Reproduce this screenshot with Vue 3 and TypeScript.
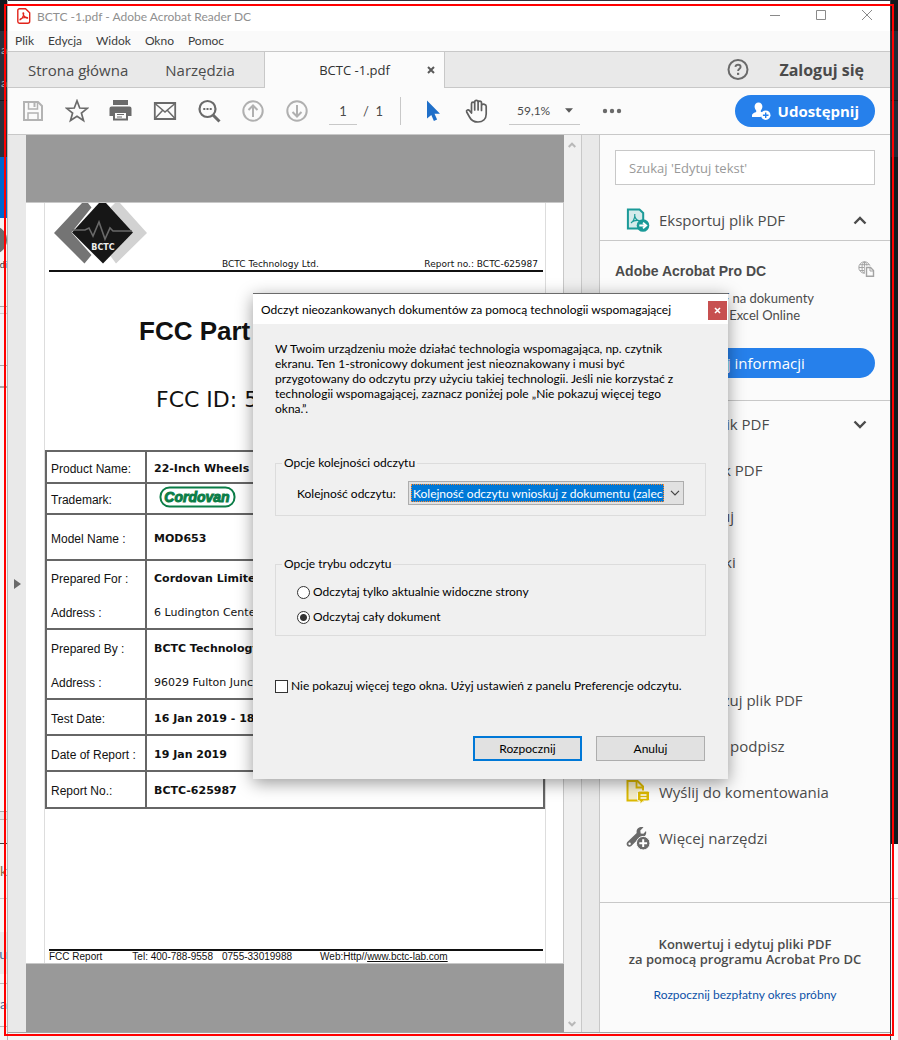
<script setup lang="ts">
import { ref } from 'vue'

interface ReportRow {
  kind: string
  label: string
  value: string
  address?: string
}

const menus: string[] = ['Plik', 'Edycja', 'Widok', 'Okno', 'Pomoc']

const rows: ReportRow[] = [
  { kind: 'r32', label: 'Product Name:', value: '22-Inch Wheels' },
  { kind: 'r31', label: 'Trademark:', value: '' },
  { kind: 'r46', label: 'Model Name :', value: 'MOD653' },
  { kind: 'r69', label: 'Prepared For :', value: 'Cordovan Limited', address: '6 Ludington Center' },
  { kind: 'r70', label: 'Prepared By :', value: 'BCTC Technology', address: '96029 Fulton Junct' },
  { kind: 'r36', label: 'Test Date:', value: '16 Jan 2019 - 18' },
  { kind: 'r36', label: 'Date of Report :', value: '19 Jan 2019' },
  { kind: 'r37', label: 'Report No.:', value: 'BCTC-625987' },
]

const query = ref('')
const page = ref('1')
const order = ref('infer')
const mode = ref('all')
const hideDialog = ref(false)
</script>

<template>
  <div class="desktop">
    <div class="strip strip-left" aria-hidden="true">
      <span class="bit b1">a</span>
      <span class="bit b2">a</span>
      <span class="disc"></span>
      <span class="bit b3">di</span>
      <span class="bit b4">k</span>
      <span class="bit b5">ou</span>
      <span class="bit b6">ła</span>
    </div>

    <div class="window">
      <header class="titlebar">
        <svg class="app-icon" width="14" height="16" viewBox="0 0 14 16" fill="none" stroke="#e2231a">
          <path d="M2.5 .8h6l4.2 4v8.4a2 2 0 0 1-2 2H2.500a1.700 1.700 0 0 1-1.700-1.700V2.500A1.700 1.700 0 0 1 2.500.8z" stroke-width="1.400" />
          <path d="M3.200 11.800c1.600-.6 3.600-4 3.500-6.500 0-.9-.9-.6-.7.4.5 2.200 2.300 4 4 4.500 1 .2.900-.9-.4-.9-2 0-4.300.6-5.900 1.500-.9.500-.9 1.200-.5 1z" stroke-width="1.200" />
        </svg>
        <span class="title">BCTC -1.pdf - Adobe Acrobat Reader DC</span>
        <div class="win-buttons">
          <button type="button" aria-label="Minimalizuj"><svg width="12" height="12" viewBox="0 0 12 12" stroke="#8a8a8a"><path d="M1 5.500h10" /></svg></button>
          <button type="button" aria-label="Maksymalizuj"><svg width="12" height="12" viewBox="0 0 12 12" fill="none" stroke="#8a8a8a"><path d="M1.500 .5h9v9h-9z" /></svg></button>
          <button type="button" aria-label="Zamknij"><svg width="12" height="12" viewBox="0 0 12 12" stroke="#8a8a8a"><path d="M1 0l10 10M11 0L1 10" /></svg></button>
        </div>
      </header>

      <nav class="menubar">
        <button v-for="m in menus" :key="m" type="button">{{ m }}</button>
      </nav>

      <div class="tabs">
        <button type="button" class="tab home">Strona główna</button>
        <button type="button" class="tab tools">Narzędzia</button>
        <div class="tab-active">
          <button type="button" class="tab-name">BCTC -1.pdf</button>
          <button type="button" class="tab-close" aria-label="Zamknij kartę">
            <svg width="8" height="8" viewBox="0 0 8 8" stroke="#5a5a5a" stroke-width="2"><path d="M1 1l6 6M7 1L1 7" /></svg>
          </button>
        </div>
        <button type="button" class="help" aria-label="Pomoc">
          <svg width="22" height="22" viewBox="0 0 22 22" fill="none" stroke="#6a6a6a" stroke-width="2">
            <circle cx="11" cy="10.500" r="9.500" />
            <path d="M8.400 7.900c.2-1.600 1.300-2.200 2.700-2.200 1.500 0 2.500.9 2.500 2.200 0 1.800-2.500 2-2.500 4.200" stroke-width="1.900" />
            <path d="M11.100 13.800v2.100" stroke-width="2.200" />
          </svg>
        </button>
        <button type="button" class="login">Zaloguj się</button>
      </div>

      <div class="toolbar">
        <button type="button" class="tool" aria-label="Zapisz">
          <svg width="24" height="24" viewBox="0 0 24 24" fill="none" stroke="#b3b3b3" stroke-width="2">
            <path d="M3 3h14l4 4v14H3z" /><path d="M7.500 3v7h9V3M7 21v-7h10v7" stroke-width="1.500" /><path d="M13.500 4v4" />
          </svg>
        </button>
        <button type="button" class="tool" aria-label="Oznacz gwiazdką">
          <svg width="24" height="24" viewBox="0 0 24 24" fill="none" stroke="#6a6a6a" stroke-width="1.700">
            <path d="M12 1.800l2.700 7.200 7.700.3-6 4.800 2.100 7.400L12 17.300l-6.500 4.200 2.100-7.400-6-4.800 7.700-.3z" />
          </svg>
        </button>
        <button type="button" class="tool" aria-label="Drukuj">
          <svg width="24" height="24" viewBox="0 0 24 24">
            <path d="M4 1h15v5H4z" fill="#6a6a6a" />
            <path d="M2.500 7.500h18a2 2 0 0 1 2 2V17h-4v-4h-14v4H.5V9.500a2 2 0 0 1 2-2z" fill="#6a6a6a" />
            <path d="M5 13h13v7.500H5z" fill="#fbfbfb" stroke="#6a6a6a" stroke-width="2" />
            <path d="M8 15.500h7M8 18h5" stroke="#6a6a6a" stroke-width="1.200" />
          </svg>
        </button>
        <button type="button" class="tool" aria-label="Wyślij e-mailem">
          <svg width="24" height="24" viewBox="0 0 24 24" fill="none" stroke="#6a6a6a" stroke-width="1.500">
            <path d="M1.800 4h20.400v16H1.800z" stroke-width="1.800" /><path d="M2 4.500l10 8.500L22 4.500M2 19.500l7.500-8M22 19.500l-7.500-8" />
          </svg>
        </button>
        <button type="button" class="tool" aria-label="Znajdź">
          <svg width="24" height="24" viewBox="0 0 24 24" fill="none" stroke="#6a6a6a">
            <circle cx="10.500" cy="10" r="8" stroke-width="2.200" /><path d="M16 16l6.500 6.500" stroke-width="3" />
            <path d="M6.300 10h2M9.500 10h2M12.700 10h2" stroke-width="2" />
          </svg>
        </button>
        <button type="button" class="tool" aria-label="Poprzednia strona">
          <svg width="24" height="24" viewBox="0 0 24 24" fill="none" stroke="#b0b0b0" stroke-width="2">
            <circle cx="12" cy="12" r="9.700" /><path d="M12 18V7M7.500 11L12 6.500l4.500 4.500" />
          </svg>
        </button>
        <button type="button" class="tool" aria-label="Następna strona">
          <svg width="24" height="24" viewBox="0 0 24 24" fill="none" stroke="#b0b0b0" stroke-width="2">
            <circle cx="12" cy="12" r="9.700" /><path d="M12 6v11M7.500 13l4.500 4.500 4.500-4.500" />
          </svg>
        </button>
        <input v-model="page" class="page" type="text" aria-label="Numer strony" />
        <span class="total">/&nbsp; 1</span>
        <span class="divider"></span>
        <button type="button" class="tool" aria-label="Zaznaczanie">
          <svg width="24" height="24" viewBox="0 0 24 24"><path d="M6 1.500v18l4.300-3.600 2.600 6 3.200-1.400-2.600-5.800H19z" fill="#1f6fc9" /></svg>
        </button>
        <button type="button" class="tool" aria-label="Rączka">
          <svg width="24" height="26" viewBox="0 0 24 26" fill="none" stroke="#5f5f5f" stroke-width="1.700" stroke-linecap="round" stroke-linejoin="round">
            <path d="M6.500 15V5.700c0-2.100 3.200-2.100 3.200 0V12 4c0-2.300 3.400-2.300 3.400 0v8-7.300c0-2.200 3.400-2.200 3.400 0V12.500 7.200c1.500-1.700 4.700-1 4.700 1V16c0 5-3.500 8-8.200 8-4.300 0-7-2-8.500-5L1.700 14c-.8-2 1.600-3 2.900-1.300z" />
          </svg>
        </button>
        <button type="button" class="zoom">59,1%
          <svg width="8" height="5" viewBox="0 0 8 5"><path d="M0 .3h8L4 4.700z" fill="#5a5a5a" /></svg>
        </button>
        <button type="button" class="more" aria-label="Więcej">
          <svg width="20" height="6" viewBox="0 0 20 6" fill="#6a6a6a"><circle cx="3" cy="3" r="2.200" /><circle cx="10" cy="3" r="2.200" /><circle cx="17" cy="3" r="2.200" /></svg>
        </button>
        <button type="button" class="share">
          <svg width="20" height="20" viewBox="0 0 20 20">
            <path d="M7.500 1.500c2.400 0 3.900 1.700 3.900 4 0 1.700-.8 3-1.600 3.900v1.400l2 .8a5 5 0 0 0-2 4.400H1v-1.400c0-2.200 2.700-2.900 4.200-3.600V9.400C4.400 8.500 3.600 7.200 3.600 5.500c0-2.300 1.500-4 3.900-4z" fill="#fff" />
            <circle cx="14.700" cy="14.200" r="4.800" fill="#fff" /><path d="M14.700 11.400v5.600M11.900 14.200h5.600" stroke="#2680eb" stroke-width="1.400" />
          </svg>
          <span>Udostępnij</span>
        </button>
      </div>

      <div class="content">
        <div class="gutter-left">
          <svg width="7" height="10" viewBox="0 0 7 10"><path d="M0 0l7 5-7 5z" fill="#6a6a6a" /></svg>
        </div>

        <main class="viewport">
          <article class="paper">
            <div class="sheet">
              <div class="letterhead">
                <svg class="logo" width="94" height="61" viewBox="0 0 94 61">
                  <path d="M28 0h6l3.500 4.500-20 25L37.500 52l-7 8.500L0 30z" fill="#747474" />
                  <path d="M66 0h-5l-4.500 4.500L79 29.500 56.500 53l5.500 7.500L93 30z" fill="#d2d2d2" />
                  <path d="M45 0h7l27 29.500L49 60.500 18 29.500z" fill="#161616" />
                  <path d="M18 27h13l4-2 4 8 6-14 6 17 5-11 3 3h19" fill="none" stroke="#686868" stroke-width="1.600" />
                  <text x="49" y="47" text-anchor="middle" font-family="DejaVu Sans, sans-serif" font-size="8" font-weight="bold" fill="#eee">BCTC</text>
                </svg>
                <span>BCTC Technology Ltd.</span>
                <span>Report no.: BCTC-625987</span>
              </div>
              <h1>FCC Part</h1>
              <p class="fcc-id">FCC ID: 5</p>
              <table>
                <tbody>
                  <tr v-for="r in rows" :key="r.label" :class="r.kind">
                    <th scope="row">
                      {{ r.label }}
                      <div v-if="r.address" class="addr">Address :</div>
                    </th>
                    <td>
                      <template v-if="r.value">{{ r.value }}</template>
                      <svg v-else class="brand" width="78" height="22" viewBox="0 0 78 22">
                        <rect x="1.500" y="1.500" width="74" height="19" rx="9" fill="#fff" stroke="#0b7d47" stroke-width="2" />
                        <text x="38" y="16" text-anchor="middle" font-family="Liberation Sans, Arial, sans-serif" font-size="14" font-weight="bold" font-style="italic" fill="#0b7d47" stroke="#0b7d47" stroke-width="1">Cordovan</text>
                      </svg>
                      <div v-if="r.address" class="addr">{{ r.address }}</div>
                    </td>
                  </tr>
                </tbody>
              </table>
              <footer class="page-foot">
                <span>FCC Report</span>
                <span>Tel: 400-788-9558</span>
                <span>0755-33019988</span>
                <span>Web:Http//<a href="#">www.bctc-lab.com</a></span>
              </footer>
            </div>
          </article>
        </main>

        <div class="scrollbar">
          <svg width="8" height="6" viewBox="0 0 8 6" fill="none" stroke="#b8b8b8" stroke-width="2"><path d="M.7 5L4 1.700 7.300 5" /></svg>
          <svg width="8" height="6" viewBox="0 0 8 6" fill="none" stroke="#b8b8b8" stroke-width="2"><path d="M.7 1L4 4.300 7.300 1" /></svg>
        </div>
        <div class="gutter-right"></div>

        <aside class="panel">
          <div class="search">
            <input v-model="query" type="text" placeholder="Szukaj 'Edytuj tekst'" aria-label="Szukaj narzędzia" />
          </div>
          <button type="button" class="row head">
            <span class="slot">
              <svg width="24" height="24" viewBox="0 0 24 24" fill="none">
                <path d="M1.900 1.500h11.600L17.200 5v15.500H1.900z" fill="#d5ebeb" stroke="#1a9a98" stroke-width="2" />
                <path d="M5 15c1.800-.8 4.200-5 3.800-9M8.700 8c.6 2.500 2.600 4.800 5 4.600-3-.6-6.300 0-8.700 2" stroke="#1a9a98" stroke-width="1.200" />
                <circle cx="17" cy="17.500" r="6.300" fill="#1a9a98" />
                <path d="M13.300 17.500h5.500M17 14.600l3.300 2.900-3.300 2.900" stroke="#fff" stroke-width="1.800" />
              </svg>
            </span>
            <span>Eksportuj plik PDF</span>
            <svg class="chev" width="14" height="9" viewBox="0 0 14 9" fill="none" stroke="#4b4b4b" stroke-width="2.400"><path d="M1.500 7.500L7 2l5.500 5.500" /></svg>
          </button>
          <section class="promo">
            <div class="promo-title">
              <h2>Adobe Acrobat Pro DC</h2>
              <svg width="17" height="16" viewBox="0 0 17 16" fill="none" stroke="#a3a3a3">
                <circle cx="6.500" cy="6.500" r="5.700" /><ellipse cx="6.500" cy="6.500" rx="2.500" ry="5.700" /><path d="M6.500 1v11M1 6.500h11M2 3.700h9M2 9.500h9" />
                <path d="M8.500 6.500h4l3 3v5.700h-7z" fill="#fbfbfb" stroke="#fbfbfb" stroke-width="3.500" />
                <path d="M8.500 6.500h4l3 3v5.700h-7z" fill="#fbfbfb" stroke-width="1.400" /><path d="M12 6.500V10h3.500" />
              </svg>
            </div>
            <p>Konwertuj pliki PDF na dokumenty<br />programu Word lub Excel Online</p>
            <button type="button" class="info">Więcej informacji</button>
          </section>
          <div class="tool-list">
            <button type="button" class="row">
              <span class="slot"></span><span>Utwórz plik PDF</span>
              <svg class="chev" width="14" height="9" viewBox="0 0 14 9" fill="none" stroke="#4b4b4b" stroke-width="2.400"><path d="M1.500 1.500L7 7l5.500-5.500" /></svg>
            </button>
            <button type="button" class="row"><span class="slot"></span><span>Edytuj plik PDF</span></button>
            <button type="button" class="row"><span class="slot"></span><span>Skomentuj</span></button>
            <button type="button" class="row"><span class="slot"></span><span>Połącz pliki</span></button>
            <button type="button" class="row later"><span class="slot"></span><span>Optymalizuj plik PDF</span></button>
            <button type="button" class="row"><span class="slot"></span><span>Wypełnij i podpisz</span></button>
            <button type="button" class="row">
              <span class="slot">
                <svg width="24" height="26" viewBox="0 0 24 26" fill="none">
                  <path d="M1.500 2h10l5.500 5.500v14H1.500z" fill="#f5eecb" stroke="#dcb900" stroke-width="2" />
                  <path d="M10.500 2v6.500H17" stroke="#dcb900" stroke-width="1.800" />
                  <path d="M13 12h9a1.500 1.500 0 0 1 1.500 1.500v7A1.500 1.500 0 0 1 22 22h-4.500L14 25.300V22h-1a1.500 1.500 0 0 1-1.500-1.500v-7A1.500 1.500 0 0 1 13 12z" fill="#dcb900" stroke="#fbfbfb" />
                  <path d="M14.500 16h6M14.500 19h6" stroke="#fff" stroke-width="1.400" />
                </svg>
              </span>
              <span>Wyślij do komentowania</span>
            </button>
            <button type="button" class="row">
              <span class="slot">
                <svg width="24" height="24" viewBox="0 0 24 24">
                  <path d="M12 2.200C13.500.9 16 .6 17.500 1.300L14.300 4.600l.4 2.800 2.700.4L20 5c.6 2-.1 4.300-1.800 5.300-1.400.8-2.700.9-3.900.6L5.300 19.900c-2.600 2.200-6.200-1-4-3.800L10.700 7c-.4-1.800 0-3.600 1.300-4.800z" fill="#6a6a6a" />
                  <circle cx="3.600" cy="17.800" r="1.200" fill="#fbfbfb" />
                  <circle cx="17.200" cy="17.200" r="6.800" fill="#6a6a6a" stroke="#fbfbfb" />
                  <path d="M17.200 13.300v7.800M13.300 17.200h7.800" stroke="#fff" stroke-width="2" />
                </svg>
              </span>
              <span>Więcej narzędzi</span>
            </button>
          </div>
          <footer class="offer">
            <p>Konwertuj i edytuj pliki PDF<br />za pomocą programu Acrobat Pro DC</p>
            <a href="#">Rozpocznij bezpłatny okres próbny</a>
          </footer>
        </aside>
      </div>
    </div>

    <div class="strip strip-right" aria-hidden="true"></div>

    <form class="dialog" role="dialog" aria-labelledby="dlg-title" @submit.prevent>
      <div class="dlg-head">
        <span id="dlg-title">Odczyt nieozankowanych dokumentów za pomocą technologii wspomagającej</span>
        <button type="button" class="dlg-close" aria-label="Zamknij">
          <svg width="7" height="7" viewBox="0 0 7 7" stroke="#fff" stroke-width="1.600"><path d="M1 1l5 5M6 1L1 6" /></svg>
        </button>
      </div>
      <div class="dlg-body">
        <p class="dlg-text">
          W Twoim urządzeniu może działać technologia wspomagająca, np. czytnik<br />
          ekranu. Ten 1-stronicowy dokument jest nieoznakowany i musi być<br />
          przygotowany do odczytu przy użyciu takiej technologii. Jeśli nie korzystać z<br />
          technologii wspomagającej, zaznacz poniżej pole „Nie pokazuj więcej tego<br />
          okna.”.
        </p>
        <fieldset class="order">
          <legend>Opcje kolejności odczytu</legend>
          <label for="order">Kolejność odczytu:</label>
          <div class="combo">
            <select id="order" v-model="order">
              <option value="infer">Kolejność odczytu wnioskuj z dokumentu (zalecane)</option>
            </select>
            <svg width="10" height="6" viewBox="0 0 10 6" fill="none" stroke="#444" stroke-width="1.200"><path d="M1 .8l4 4 4-4" /></svg>
          </div>
        </fieldset>
        <fieldset class="mode">
          <legend>Opcje trybu odczytu</legend>
          <label><input v-model="mode" type="radio" name="mode" value="visible" />Odczytaj tylko aktualnie widoczne strony</label>
          <label><input v-model="mode" type="radio" name="mode" value="all" />Odczytaj cały dokument</label>
        </fieldset>
        <label class="never"><input v-model="hideDialog" type="checkbox" />Nie pokazuj więcej tego okna. Użyj ustawień z panelu Preferencje odczytu.</label>
        <div class="dlg-actions">
          <button type="submit" class="primary">Rozpocznij</button>
          <button type="button">Anuluj</button>
        </div>
      </div>
    </form>

    <div class="frame" aria-hidden="true"></div>
  </div>
</template>

<style>
body {
  margin: 0;
}
</style>

<style scoped>
* {
  box-sizing: border-box;
}
.desktop {
  position: relative;
  display: grid;
  grid-template-columns: 8px minmax(0, 1fr) 8px;
  min-height: 100vh;
  background: #f5f5f5;
  font-family: Lato, "Open Sans", "Noto Sans", sans-serif;
  font-size: 12px;
  color: #4b4b4b;
}
button {
  padding: 0;
  border: 0;
  background: none;
  font: inherit;
  color: inherit;
}
svg {
  display: block;
}
p,
h1,
h2 {
  margin: 0;
}
.frame {
  position: absolute;
  inset: 4px;
  border: 2px solid #f00;
  pointer-events: none;
}
.strip {
  position: relative;
  overflow: hidden;
}
.strip-left {
  border-right: 1px solid #b5b5b5;
  background: linear-gradient(#16191e 31px, #2b303c 31px 100px, #14171c 100px 101px, #2b303c 101px 157px, #0067cf 157px 218px, #f4f4f4 218px 306px, #aaa 306px 307px, #f0f0f4 307px 313px, #ccc 313px 314px, #f4f4f8 314px 365px, #aaa 365px 366px, #f4f4f8 366px 386px, #aaa 386px 388px, #f8f8fa 388px 811px, #aaa 811px 812px, #e8e8ea 812px 819px, #bbb 819px 820px, #f0f0f2 820px 843px, #444 843px 844px, #f7f7f7 844px 898px, #ccc 898px 899px, #f7f7f7 899px 932px, #ebebeb 932px 974px, #f7f7f7 974px 983px, #bbb 983px 984px, #f7f7f7 984px 1026px, #bbb 1026px 1027px, #f5f5f5 1027px);
}
.strip-right {
  border-left: 1px solid #343640;
  background: linear-gradient(#12171b 31px, #202a35 31px 100px, #12171b 100px 101px, #202a35 101px 157px, #0f181c 157px 844px, #fafafa 844px 898px, #ccc 898px 899px, #fafafa 899px);
}
.bit {
  position: absolute;
  right: 0;
  font-size: 14px;
  line-height: 16px;
  color: #4d6c96;
}
.b1 { top: 42px; color: #a5abb5; font-size: 12px; }
.b2 { top: 75px; color: #a5abb5; font-size: 12px; }
.b3 { top: 257px; color: #333; font-size: 9px; }
.b4 { top: 863px; color: #8a7250; }
.b5 { top: 946px; }
.b6 { top: 996px; }
.disc {
  position: absolute;
  top: 226px;
  right: 0;
  width: 28px;
  height: 28px;
  border-radius: 50%;
  background: #6c6c6c;
}

/* Window shell */
.window {
  display: flex;
  flex-direction: column;
  min-width: 0;
  margin-bottom: 7px;
  border-top: 1px solid #34323c;
  border-bottom: 1px solid #a3a3a3;
  background: #fbfbfb;
}
.titlebar {
  display: flex;
  align-items: center;
  height: 30px;
  padding: 0 17px 0 9px;
  background: #fff;
  color: #8f8f8f;
}
.title {
  margin-left: 6px;
}
.win-buttons {
  display: flex;
  gap: 34px;
  margin-left: auto;
}
.menubar {
  display: flex;
  gap: 14px;
  height: 21px;
  padding: 0 7px 2px;
  border-bottom: 1px solid #c8c8c8;
  background: #fafafa;
  color: #3c3c3c;
}
.tabs {
  display: flex;
  align-items: stretch;
  height: 36px;
  background: #e9e9e9;
  font-family: "Open Sans", "Noto Sans", sans-serif;
  font-size: 15px;
  box-shadow: inset 0 -1px #c8c8c8;
}
.home {
  padding-left: 20px;
}
.tools {
  margin: 0 29px 0 37px;
}
.tab-active {
  display: flex;
  align-items: center;
  justify-content: flex-end;
  gap: 37px;
  width: 181px;
  padding-right: 9px;
  border: solid #c8c8c8;
  border-width: 0 1px;
  background: #fbfbfb;
  font-size: 13px;
  color: #323232;
}
.help {
  margin: 0 30px 0 auto;
}
.login {
  margin-right: 26px;
  font-size: 16px;
  font-weight: 700;
}
.toolbar {
  display: flex;
  align-items: center;
  height: 47px;
  padding: 0 15px 0 13px;
  border-bottom: 1px solid #c8c8c8;
}
.tool {
  flex: none;
  width: 24px;
  margin-right: 20px;
}
.page {
  width: 28px;
  height: 28px;
  padding: 0;
  border: 0;
  border-bottom: 1px solid #c8c8c8;
  background: none;
  font: inherit;
  font-size: 13px;
  color: #4b4b4b;
  text-align: center;
}
.total {
  width: 20px;
  margin-left: 6px;
  font-size: 13px;
  white-space: nowrap;
}
.divider {
  width: 1px;
  height: 28px;
  margin: 0 20px 0 17px;
  background: #c8c8c8;
}
.zoom {
  display: flex;
  align-items: center;
  justify-content: space-between;
  width: 71px;
  height: 28px;
  padding: 0 7px 0 8px;
  border-bottom: 1px solid #c8c8c8;
}
.more {
  margin-left: 22px;
}
.share {
  display: flex;
  align-items: center;
  gap: 7px;
  height: 32px;
  margin-left: auto;
  padding: 0 16px;
  border-radius: 16px;
  background: #2680eb;
  font-family: "Open Sans", "Noto Sans", sans-serif;
  font-size: 15px;
  font-weight: 700;
  color: #fff;
}

/* Document area */
.content {
  display: flex;
  flex: 1;
}
.gutter-left {
  display: flex;
  align-items: center;
  justify-content: center;
  width: 18px;
  background: #e9e9e9;
}
.viewport {
  display: flex;
  flex: 1;
  align-items: center;
  min-width: 0;
  padding-bottom: 2px;
  background: #999;
}
.paper {
  width: 100%;
  padding: 0 17px 0 18px;
  border: 1px solid #c8c8c8;
  border-left: 0;
  background: #fff;
  color: #111;
}
.sheet {
  border: solid #ddd;
  border-width: 0 1px;
}
.letterhead {
  display: flex;
  align-items: flex-end;
  height: 69px;
  margin: 0 2px 0 4px;
  padding-right: 5px;
  border-bottom: 2px solid #111;
  font-family: "DejaVu Sans", sans-serif;
  font-size: 9px;
  line-height: 11px;
}
.letterhead .logo {
  align-self: flex-start;
  margin: 0 74px 0 5px;
}
.letterhead span:last-child {
  margin-left: auto;
}
h1 {
  margin: 44px 0 0 94px;
  font: bold 26px/30px "Liberation Sans", Arial, sans-serif;
}
.fcc-id {
  margin: 39px 0 0 111px;
  font: 22px/30px "DejaVu Sans", sans-serif;
}
table {
  width: 100%;
  margin-top: 35px;
  border-collapse: collapse;
  table-layout: fixed;
  font-size: 12px;
}
th,
td {
  padding: 4px 6px 0 7px;
  border: 2px solid #666;
  text-align: left;
}
th {
  width: 100px;
  padding: 4px 0 0 4px;
  font: 12px/14px "Liberation Sans", Arial, sans-serif;
}
td {
  font: bold 11px/14px "DejaVu Sans", sans-serif;
}
td .addr {
  font-weight: 400;
}
.addr {
  margin-top: 20px;
}
.brand {
  margin: -6px 0 0 5px;
}
.r31 { height: 31px; }
.r32 { height: 32px; }
.r36 { height: 36px; }
.r37 { height: 37px; }
.r46 { height: 46px; }
.r69 { height: 69px; }
.r70 { height: 70px; }
.page-foot {
  display: flex;
  margin: 140px 2px 0 4px;
  border-top: 2px solid #111;
  font: 10px/12px "Liberation Sans", Arial, sans-serif;
}
.page-foot span:nth-child(2) { margin-left: 30px; }
.page-foot span:nth-child(3) { margin-left: 9px; }
.page-foot span:nth-child(4) { margin-left: 28px; }
.page-foot a {
  color: inherit;
}
.scrollbar {
  display: flex;
  flex-direction: column;
  align-items: center;
  justify-content: space-between;
  width: 18px;
  padding: 7px 1px 5px 0;
  border-right: 1px solid #c8c8c8;
  background: #f0f0f0;
}
.gutter-right {
  width: 17px;
  background: #e9e9e9;
}

/* Tools panel */
.panel {
  display: flex;
  flex-direction: column;
  width: 291px;
  border-left: 1px solid #c8c8c8;
}
.search {
  padding: 15px;
}
.search input {
  display: block;
  width: 100%;
  height: 35px;
  padding: 0 13px;
  border: 1px solid #c8c8c8;
  background: #fff;
  font: 13px "Open Sans", "Noto Sans", sans-serif;
}
.search input::placeholder {
  color: #999;
  opacity: 1;
}
.row {
  display: flex;
  align-items: center;
  width: 100%;
  height: 46px;
  padding: 0 23px 0 26px;
  font-family: "Open Sans", "Noto Sans", sans-serif;
  font-size: 15px;
}
.head {
  height: 41px;
  border-bottom: 1px solid #c8c8c8;
}
.slot {
  width: 33px;
}
.chev {
  margin-left: auto;
}
.promo {
  padding: 20px 15px 22px;
  border-bottom: 1px solid #c8c8c8;
}
.promo-title {
  display: flex;
  justify-content: space-between;
  height: 20px;
}
h2 {
  font: bold 14px/20px "Liberation Sans", Arial, sans-serif;
}
.promo p {
  margin-top: 9px;
  font-size: 13px;
  line-height: 17px;
}
.info {
  width: 100%;
  height: 30px;
  margin-top: 24px;
  border-radius: 15px;
  background: #2680eb;
  font-family: "Open Sans", "Noto Sans", sans-serif;
  font-size: 15px;
  color: #fff;
}
.later {
  margin-top: 92px;
}
.offer {
  margin-top: auto;
  padding: 34px 0 30px;
  border-top: 1px solid #c8c8c8;
  text-align: center;
  line-height: 15px;
}
.offer p {
  margin-bottom: 20px;
  font: 600 13px/15px "Open Sans", "Noto Sans", sans-serif;
}
.offer a {
  color: #0d52a8;
  text-decoration: none;
}

/* Dialog */
.dialog {
  position: absolute;
  top: 293px;
  left: 253px;
  width: 475px;
  border-top: 1px solid #6b6b6b;
  background: #f0f0f0;
  box-shadow: 0 4px 16px rgba(0, 0, 0, 0.4);
  color: #000;
}
.dlg-head {
  display: flex;
  align-items: center;
  justify-content: space-between;
  height: 30px;
  padding: 0 1px 0 8px;
  background: #fff;
}
.dlg-close {
  display: flex;
  align-items: center;
  justify-content: center;
  width: 19px;
  height: 19px;
  margin-top: 2px;
  background: #c75050;
}
.dlg-body {
  padding: 17px 22px 18px;
}
.dlg-text {
  line-height: 15px;
  white-space: nowrap;
}
fieldset {
  min-width: 0;
  margin: 0;
  border: 1px solid #dcdcdc;
}
legend {
  margin-left: -15px;
  padding: 0 2px;
  line-height: 16px;
}
.order {
  display: flex;
  align-items: center;
  justify-content: space-between;
  height: 61px;
  margin-top: 39px;
  padding: 0 21px;
}
.combo {
  display: flex;
  align-items: center;
  width: 276px;
  height: 24px;
  padding: 2px;
  border: 1px solid #adadad;
  background: #e1e1e1;
}
.combo select {
  width: 253px;
  height: 18px;
  margin-right: 6px;
  padding: 0 0 0 1px;
  border: 1px dotted #ff8728;
  border-radius: 0;
  background: #0078d7;
  font: inherit;
  color: #fff;
  appearance: none;
}
.mode {
  display: flex;
  flex-direction: column;
  gap: 9px;
  height: 80px;
  margin-top: 40px;
  padding: 12px 21px 0;
}
.mode label,
.never {
  display: flex;
  align-items: center;
  gap: 3px;
  line-height: 16px;
}
.mode input,
.never input {
  width: 13px;
  height: 13px;
  margin: 0;
  border: 1px solid #333;
  background: #fff;
  appearance: none;
}
.mode input {
  border-radius: 50%;
}
.mode input:checked {
  background: radial-gradient(circle, #333 3px, #fff 4px);
}
.never {
  margin-top: 42px;
  white-space: nowrap;
}
.dlg-actions {
  display: flex;
  justify-content: flex-end;
  gap: 14px;
  margin-top: 42px;
  padding-right: 1px;
}
.dlg-actions button {
  width: 109px;
  height: 25px;
  border: 1px solid #adadad;
  background: #e1e1e1;
}
.dlg-actions .primary {
  border: 2px solid #0078d7;
}
</style>
